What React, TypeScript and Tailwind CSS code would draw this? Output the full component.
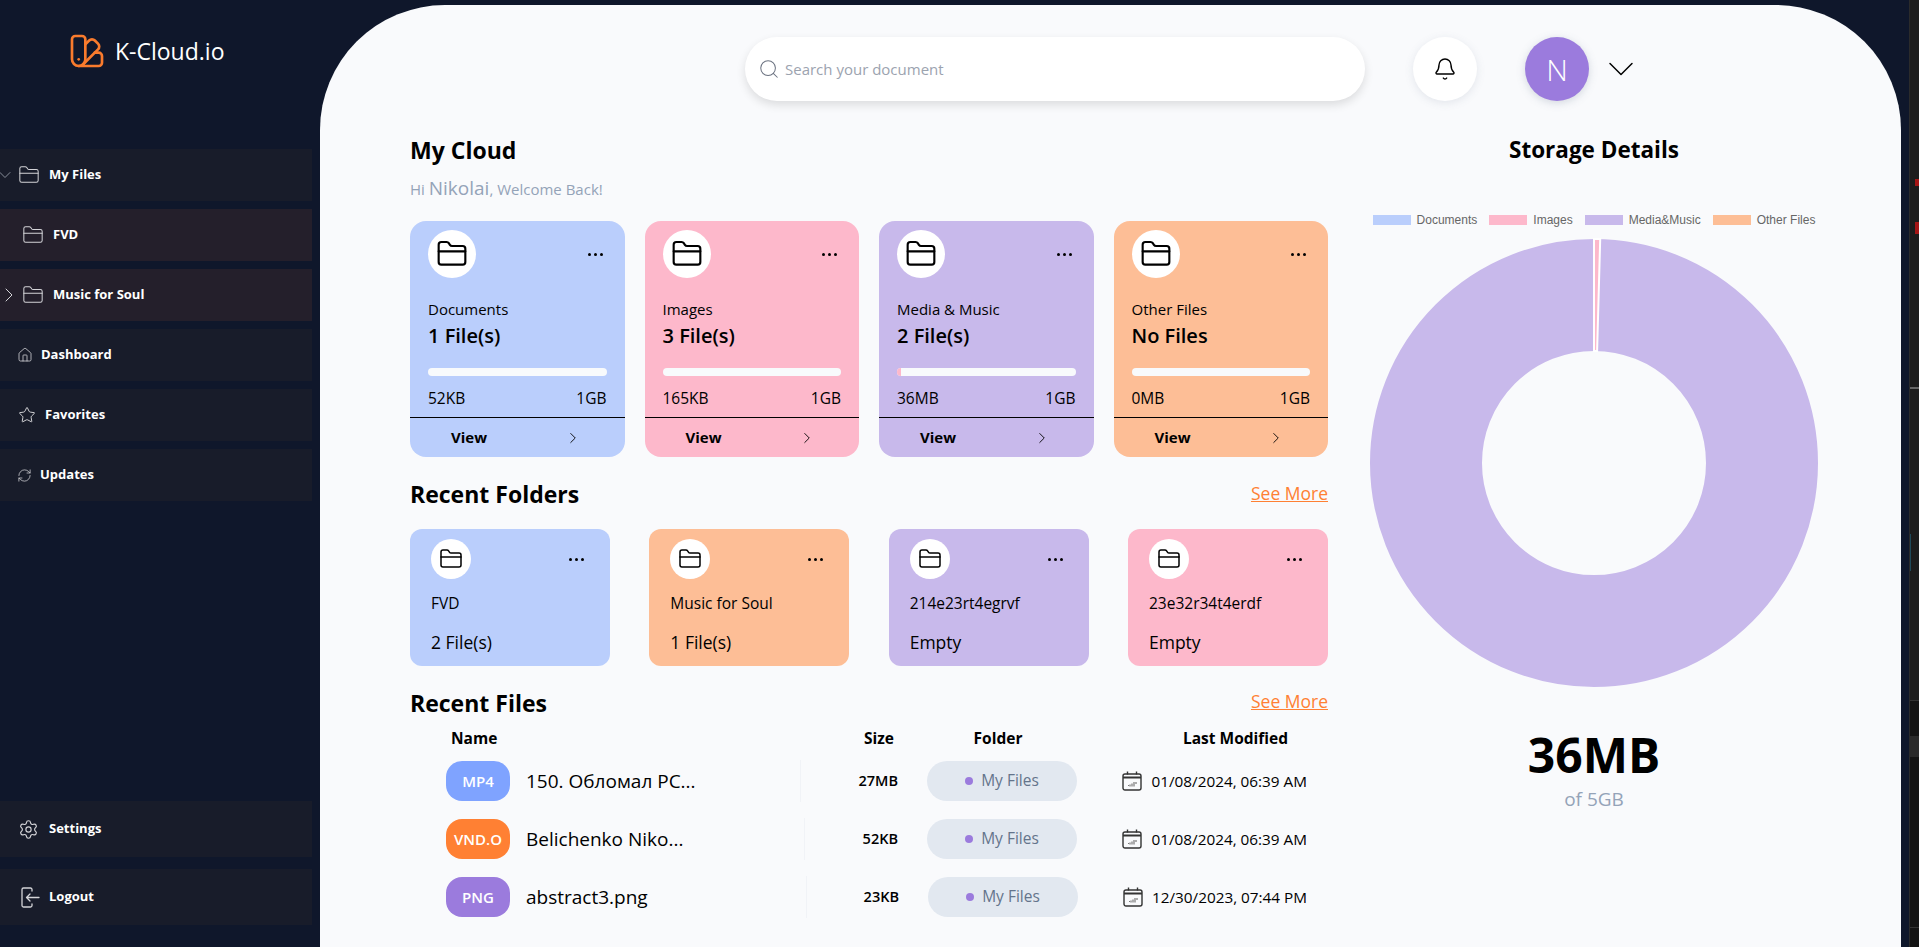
import { Bell, ChevronDown, ChevronRight, FolderClosed, House, RefreshCw, Search, Settings, Star, SwatchBook } from "lucide-react";

const font = "font-['Open_Sans','Noto_Sans',sans-serif]";

function Dots() {
  return (
    <div className="flex gap-[3px]">
      <span className="w-[3px] h-[3px] rounded-full bg-black" />
      <span className="w-[3px] h-[3px] rounded-full bg-black" />
      <span className="w-[3px] h-[3px] rounded-full bg-black" />
    </div>
  );
}

function LogoutIcon() {
  return (
    <svg width="20" height="21" viewBox="0 0 20 21" fill="none" stroke="#d4d4d8" strokeWidth="1.3" strokeLinecap="round" strokeLinejoin="round">
      <path d="M12 4V2.5A1.5 1.5 0 0 0 10.5 1h-7A1.5 1.5 0 0 0 2 2.5v16A1.5 1.5 0 0 0 3.5 20h7a1.5 1.5 0 0 0 1.5-1.5V17" />
      <path d="M19 10.5H6.5M10 7l-3.5 3.5L10 14" />
    </svg>
  );
}

function CalendarIcon() {
  return (
    <svg width="20" height="20" viewBox="0 0 20 20" fill="none" className="shrink-0">
      <rect x="1" y="3" width="18" height="16" rx="2" stroke="#333" strokeWidth="1.4" />
      <path d="M1 6.5h18" stroke="#333" strokeWidth="2" />
      <path d="M5.5 0.5v3M14.5 0.5v3" stroke="#333" strokeWidth="1.4" />
      <path d="M6 14.5h1M8 13.5v2M10 12.5v3M12 11v4.5M14 11v2" stroke="#777" strokeWidth="1.2" />
    </svg>
  );
}

function SideItem(props: { label: string; icon: React.ReactNode; tone?: string; height?: string; pad: string; gap: string }) {
  return (
    <div className={`w-[312px] flex items-center ${props.height ?? "h-[52px]"} ${props.tone ?? "bg-[#181c2a]"} ${props.pad} ${props.gap}`}>
      {props.icon}
      <span className="text-[13px] font-bold text-white">{props.label}</span>
    </div>
  );
}

const cards = [
  { title: "Documents", files: "1 File(s)", used: "52KB", bg: "bg-[#bacefc]", bar: "w-0" },
  { title: "Images", files: "3 File(s)", used: "165KB", bg: "bg-[#fdb8cb]", bar: "w-0" },
  { title: "Media & Music", files: "2 File(s)", used: "36MB", bg: "bg-[#c8b9eb]", bar: "w-[4px]" },
  { title: "Other Files", files: "No Files", used: "0MB", bg: "bg-[#fdbe96]", bar: "w-0" },
];

const folders = [
  { title: "FVD", files: "2 File(s)", bg: "bg-[#bacefc]" },
  { title: "Music for Soul", files: "1 File(s)", bg: "bg-[#fdbe96]" },
  { title: "214e23rt4egrvf", files: "Empty", bg: "bg-[#c8b9eb]" },
  { title: "23e32r34t4erdf", files: "Empty", bg: "bg-[#fdb8cb]" },
];

const files = [
  { chip: "MP4", chipBg: "bg-[#7fa3ff]", name: "150. Обломал РС...", size: "27MB", date: "01/08/2024, 06:39 AM", cols: "grid-cols-[391px_97px_204px_226px]" },
  { chip: "VND.O", chipBg: "bg-[#ff8033]", name: "Belichenko Niko...", size: "52KB", date: "01/08/2024, 06:39 AM", cols: "grid-cols-[395px_93px_204px_226px]" },
  { chip: "PNG", chipBg: "bg-[#9b7bdd]", name: "abstract3.png", size: "23KB", date: "12/30/2023, 07:44 PM", cols: "grid-cols-[397px_92px_203px_226px]" },
];

const legend = [
  { label: "Documents", bg: "bg-[#bacefc]" },
  { label: "Images", bg: "bg-[#fdb8cb]" },
  { label: "Media&Music", bg: "bg-[#c8b9eb]" },
  { label: "Other Files", bg: "bg-[#fdbe96]" },
];

function Donut() {
  return (
    <svg width="450" height="450" viewBox="0 0 450 450" className="block">
      <circle cx="225" cy="225" r="168" fill="none" stroke="#c8b9eb" strokeWidth="112" />
      <path d="M225 1 L225 113" stroke="#fff" strokeWidth="2" />
      <path d="M225 1 A224 224 0 0 1 231.2 1.1 L228.1 113 A112 112 0 0 0 225 113 Z" fill="#fdb8cb" stroke="#fff" strokeWidth="2" />
    </svg>
  );
}

export default function App() {
  return (
    <div className={`flex h-screen w-full overflow-hidden bg-[#0f172b] ${font}`}>
      <aside className="w-[320px] shrink-0 flex flex-col h-full">
        <div className="flex items-center h-[149px] pb-[47px] pl-[67px] gap-[8px]">
          <SwatchBook size={40} strokeWidth={1.6} className="text-[#f97b2d]" />
          <span className="text-[23px] text-white">K-Cloud.io</span>
        </div>
        <div className="flex flex-col gap-2">
          <SideItem
            label="My Files"
            pad="pl-0"
            gap="gap-[9px]"
            icon={
              <div className="flex items-center gap-[3px] -ml-[5px]">
                <ChevronDown size={20} strokeWidth={1} className="text-[#9ca3af]" />
                <FolderClosed size={22} strokeWidth={1.1} className="text-[#d4d4d8]" />
              </div>
            }
          />
          <SideItem label="FVD" tone="bg-[#241f2b]" pad="pl-[22px]" gap="gap-[9px]" icon={<FolderClosed size={22} strokeWidth={1.1} className="text-[#d4d4d8]" />} />
          <SideItem
            label="Music for Soul"
            tone="bg-[#241f2b]"
            pad="pl-0"
            gap="gap-[9px]"
            icon={
              <div className="flex items-center gap-[1px] -ml-[3px]">
                <ChevronRight size={24} strokeWidth={1} className="text-[#d4d4d8]" />
                <FolderClosed size={22} strokeWidth={1.1} className="text-[#d4d4d8]" />
              </div>
            }
          />
          <SideItem label="Dashboard" pad="pl-[17px]" gap="gap-[8px]" icon={<House size={16} strokeWidth={1.2} className="text-[#d4d4d8]" />} />
          <SideItem label="Favorites" pad="pl-[18px]" gap="gap-[9px]" icon={<Star size={18} strokeWidth={1.2} className="text-[#e4e4e7]" />} />
          <SideItem label="Updates" pad="pl-[17px]" gap="gap-[8px]" icon={<RefreshCw size={15} strokeWidth={1.2} className="text-[#d4d4d8]" />} />
        </div>
        <div className="flex-1" />
        <div className="flex flex-col gap-3 pb-[22px]">
          <SideItem label="Settings" height="h-[56px]" pad="pl-[18px]" gap="gap-[10px]" icon={<Settings size={21} strokeWidth={1.3} className="text-[#d4d4d8]" />} />
          <SideItem label="Logout" height="h-[56px]" pad="pl-[20px]" gap="gap-[9px]" icon={<LogoutIcon />} />
        </div>
      </aside>

      <main className="w-[1581px] shrink-0 mt-[5px] bg-[#f9fafc] rounded-t-[125px] pl-[90px]">
        <header className="flex items-center pt-[32px] pl-[335px]">
          <div className="w-[620px] h-[64px] rounded-full bg-white shadow-[0_4px_10px_rgba(0,0,0,0.12)] flex items-center pl-[13px] gap-[5px]">
            <Search size={22} strokeWidth={1.1} className="text-[#6b7280]" />
            <span className="text-[15px] text-[#9ca3af]">Search your document</span>
          </div>
          <div className="ml-[48px] w-[64px] h-[64px] rounded-full bg-white shadow-[0_2px_8px_rgba(100,116,139,0.15)] flex items-center justify-center">
            <Bell size={24} strokeWidth={1.4} className="text-black" />
          </div>
          <div className="ml-[48px] w-[64px] h-[64px] rounded-full bg-[#9b7bdd] shadow-[0_2px_8px_rgba(100,116,139,0.25)] flex items-center justify-center text-[30px] font-light text-white">N</div>
          <ChevronDown size={44} strokeWidth={0.8} className="ml-[10px] text-black" />
        </header>

        <div className="flex">
          <section className="w-[918px] shrink-0">
            <h1 className="text-[23px] font-bold text-black mt-[33px] leading-[32px]">My Cloud</h1>
            <p className="text-[15px] text-[#94a3b8] mt-[10px] leading-[24px]">
              Hi <span className="text-[19px]">Nikolai</span>, Welcome Back!
            </p>
            <div className="grid grid-cols-4 gap-5 mt-[20px]">
              {cards.map((card) => (
                <div key={card.title} className={`h-[236px] rounded-2xl flex flex-col ${card.bg}`}>
                  <div className="flex items-center justify-between pt-[9px] pl-[18px] pr-[22px]">
                    <div className="w-[48px] h-[48px] rounded-full bg-white flex items-center justify-center">
                      <FolderClosed size={32} strokeWidth={1.6} className="text-black" />
                    </div>
                    <Dots />
                  </div>
                  <div className="px-[18px] flex-1">
                    <div className="text-[15px] text-black mt-[21px] leading-[20px]">{card.title}</div>
                    <div className="text-[20px] font-semibold text-black mt-[4px] leading-[26px]">{card.files}</div>
                    <div className="h-[8px] rounded-full bg-[#f8fafc] mt-[19px] overflow-hidden">
                      <div className={`h-full bg-[#fdb8cb] ${card.bar}`} />
                    </div>
                    <div className="flex justify-between text-[15.5px] text-black mt-[12px] leading-[20px]">
                      <span>{card.used}</span>
                      <span>1GB</span>
                    </div>
                  </div>
                  <div className="h-[40px] border-t border-black flex items-center pl-[41px] pr-[43px] justify-between">
                    <span className="text-[15px] font-bold text-black">View</span>
                    <ChevronRight size={18} strokeWidth={1.2} className="text-black" />
                  </div>
                </div>
              ))}
            </div>

            <div className="flex items-center justify-between mt-[20px] h-[34px]">
              <h2 className="text-[23px] font-bold text-black">Recent Folders</h2>
              <a className="text-[17.5px] text-[#ff8033] underline -mt-[2px]">See More</a>
            </div>
            <div className="flex justify-between mt-[18px]">
              {folders.map((folder) => (
                <div key={folder.title} className={`w-[200px] h-[137px] rounded-xl pl-[21px] pr-[26px] ${folder.bg}`}>
                  <div className="flex items-center justify-between pt-[10px]">
                    <div className="w-[40px] h-[40px] rounded-full bg-white flex items-center justify-center">
                      <FolderClosed size={24} strokeWidth={1.5} className="text-black" />
                    </div>
                    <Dots />
                  </div>
                  <div className="text-[15.5px] text-black mt-[14px] leading-[20px]">{folder.title}</div>
                  <div className="text-[17.5px] font-medium text-black mt-[18px] leading-[22px]">{folder.files}</div>
                </div>
              ))}
            </div>

            <div className="flex items-center justify-between mt-[20px] h-[34px]">
              <h2 className="text-[23px] font-bold text-black">Recent Files</h2>
              <a className="text-[17.5px] text-[#ff8033] underline -mt-[4px]">See More</a>
            </div>
            <div className="grid grid-cols-[391px_93px_208px_226px] text-[15.5px] font-bold text-black mt-[8px] leading-[20px]">
              <span className="pl-[41px]">Name</span>
              <span className="text-right">Size</span>
              <span className="text-center">Folder</span>
              <span className="text-right pr-[40px]">Last Modified</span>
            </div>
            <div className="flex flex-col gap-[18px] mt-[12px]">
              {files.map((file) => (
                <div key={file.chip} className={`grid items-center h-[40px] ${file.cols}`}>
                  <div className="flex items-center h-[42px] pl-[36px] gap-[16px] border-r border-[#f1f3f7]">
                    <div className={`w-[64px] h-[40px] rounded-2xl flex items-center justify-center text-[15px] font-semibold text-white ${file.chipBg}`}>{file.chip}</div>
                    <span className="text-[19px] text-black">{file.name}</span>
                  </div>
                  <span className="text-[14.5px] font-semibold text-black text-right">{file.size}</span>
                  <div className="pl-[29px]">
                    <div className="w-[150px] h-[40px] rounded-full bg-[#e2e8f0] flex items-center justify-center gap-[8px]">
                      <span className="w-[8px] h-[8px] rounded-full bg-[#9b7bdd]" />
                      <span className="text-[15.5px] text-[#64748b]">My Files</span>
                    </div>
                  </div>
                  <div className="flex items-center justify-end gap-[9px] pr-[21px] text-[15.3px] text-black">
                    <CalendarIcon />
                    <span>{file.date}</span>
                  </div>
                </div>
              ))}
            </div>
          </section>

          <section className="flex-1 flex flex-col items-start">
            <div className="w-[450px] ml-[41px] flex flex-col items-center">
              <h2 className="text-[22.5px] font-bold text-black mt-[33px] leading-[32px]">Storage Details</h2>
              <div className="flex items-center gap-[12px] mt-[48px] h-[12px] whitespace-nowrap font-['Liberation_Sans',sans-serif] text-[12px] text-[#666]">
                {legend.map((item) => (
                  <div key={item.label} className="flex items-center gap-[6px]">
                    <span className={`w-[38px] h-[10px] ${item.bg}`} />
                    <span>{item.label}</span>
                  </div>
                ))}
              </div>
              <div className="mt-[12px]">
                <Donut />
              </div>
              <div className="text-[48px] font-bold text-black mt-[37px] leading-[60px]">36MB</div>
              <div className="text-[19px] text-[#94a3b8] mt-[1px] leading-[26px]">of 5GB</div>
            </div>
          </section>
        </div>
      </main>

      <div className="w-[8px] shrink-0" />
      <div className="w-[10px] shrink-0 h-full bg-[#1c1c1c] border-l border-[#2b2b2b] flex flex-col items-end">
        <span className="w-[4px] h-[7px] mt-[179px] bg-[#a31515]" />
        <span className="w-[4px] h-[12px] mt-[36px] bg-[#a31515]" />
        <span className="w-full h-[2px] mt-[153px] bg-[#666]" />
        <span className="w-[1px] h-[37px] mt-[145px] self-start bg-[#1f4a5a]" />
        <div className="w-full flex-1 mt-[129px] bg-[#141414] border-t border-[#333] flex flex-col">
          <span className="w-full h-[21px] mt-[35px] bg-[#2a2a2a]" />
          <span className="w-full h-[1px] mt-[170px] bg-[#333]" />
        </div>
      </div>
    </div>
  );
}
